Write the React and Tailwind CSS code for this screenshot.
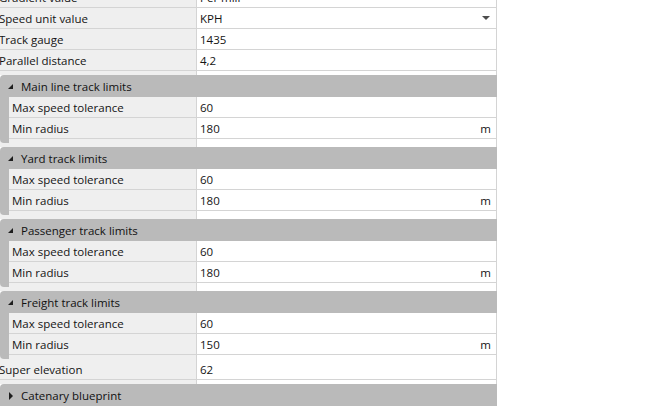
import React from 'react';

const LABEL_BG = 'bg-[#efefef]';

function Expanded() {
  return (
    <svg width="6" height="6" viewBox="0 0 6 6" className="shrink-0">
      <path d="M5 0 L5 5 L0 5 Z" fill="#1e1e1e" />
    </svg>
  );
}

function Collapsed() {
  return (
    <svg width="5" height="8" viewBox="0 0 5 8" className="shrink-0">
      <path d="M0 0 L4 4 L0 8 Z" fill="#1e1e1e" />
    </svg>
  );
}

function Row({ label, value, unit, dropdown, nested }) {
  return (
    <div className="flex h-[21px] border-b border-[#d4d4d4]">
      <div
        className={`flex items-center border-r border-[#d4d4d4] pt-[2px] ${LABEL_BG} ${
          nested ? 'w-[188px] pl-[3px]' : 'w-[197px] pl-0'
        }`}
      >
        <span className={nested ? '' : '-ml-[1px]'}>{label}</span>
      </div>
      <div className="flex flex-1 items-center justify-between border-r border-[#d4d4d4] bg-white pl-[3px] pr-[5px] pt-[2px]">
        <span>{value}</span>
        {unit && <span>{unit}</span>}
        {dropdown && (
          <svg width="8" height="4" viewBox="0 0 8 4" className="mr-[1px] -mt-[2px]">
            <path d="M0 0 L8 0 L4 4 Z" fill="#4d4d4d" />
          </svg>
        )}
      </div>
    </div>
  );
}

function Spacer({ h = 'h-[4px]', nested }) {
  return (
    <div className={`flex ${h}`}>
      <div className={`${nested ? 'w-[188px]' : 'w-[197px]'} border-r border-[#d4d4d4] ${LABEL_BG}`} />
      <div className="flex-1 border-r border-[#d4d4d4] bg-white" />
    </div>
  );
}

function Header({ title, open = true }) {
  return (
    <div className="flex h-[22px] items-center rounded-tl-[4px] bg-[#bababa]">
      <div className="flex w-[21px] justify-center pl-[1px] pt-[1px]">{open ? <Expanded /> : <Collapsed />}</div>
      <span className="pt-[2px] text-[#111]">{title}</span>
    </div>
  );
}

function Group({ title, minRadius }) {
  return (
    <div>
      <Header title={title} />
      <div className="flex">
        <div className={`w-[9px] ${LABEL_BG}`}>
          <div className="h-[46px] rounded-bl-[4px] bg-[#bababa]" />
        </div>
        <div className="flex-1">
          <Row nested label="Max speed tolerance" value="60" />
          <Row nested label="Min radius" value={minRadius} unit="m" />
          <Spacer nested />
        </div>
      </div>
    </div>
  );
}

export default function App() {
  return (
    <div className="h-[406px] w-[669px] overflow-hidden bg-white font-['Open_Sans',sans-serif] text-[11.5px] text-[#141414]">
      <div className="-mt-[13px] w-[497px]">
        <Row label="Gradient value" value="Per mill" />
        <Row label="Speed unit value" value="KPH" dropdown />
        <Row label="Track gauge" value="1435" />
        <Row label="Parallel distance" value="4,2" />
        <Spacer />
        <Group title="Main line track limits" minRadius="180" />
        <Spacer />
        <Group title="Yard track limits" minRadius="180" />
        <Spacer />
        <Group title="Passenger track limits" minRadius="180" />
        <Spacer />
        <Group title="Freight track limits" minRadius="150" />
        <Row label="Super elevation" value="62" />
        <Spacer />
        <Header title="Catenary blueprint" open={false} />
      </div>
    </div>
  );
}
